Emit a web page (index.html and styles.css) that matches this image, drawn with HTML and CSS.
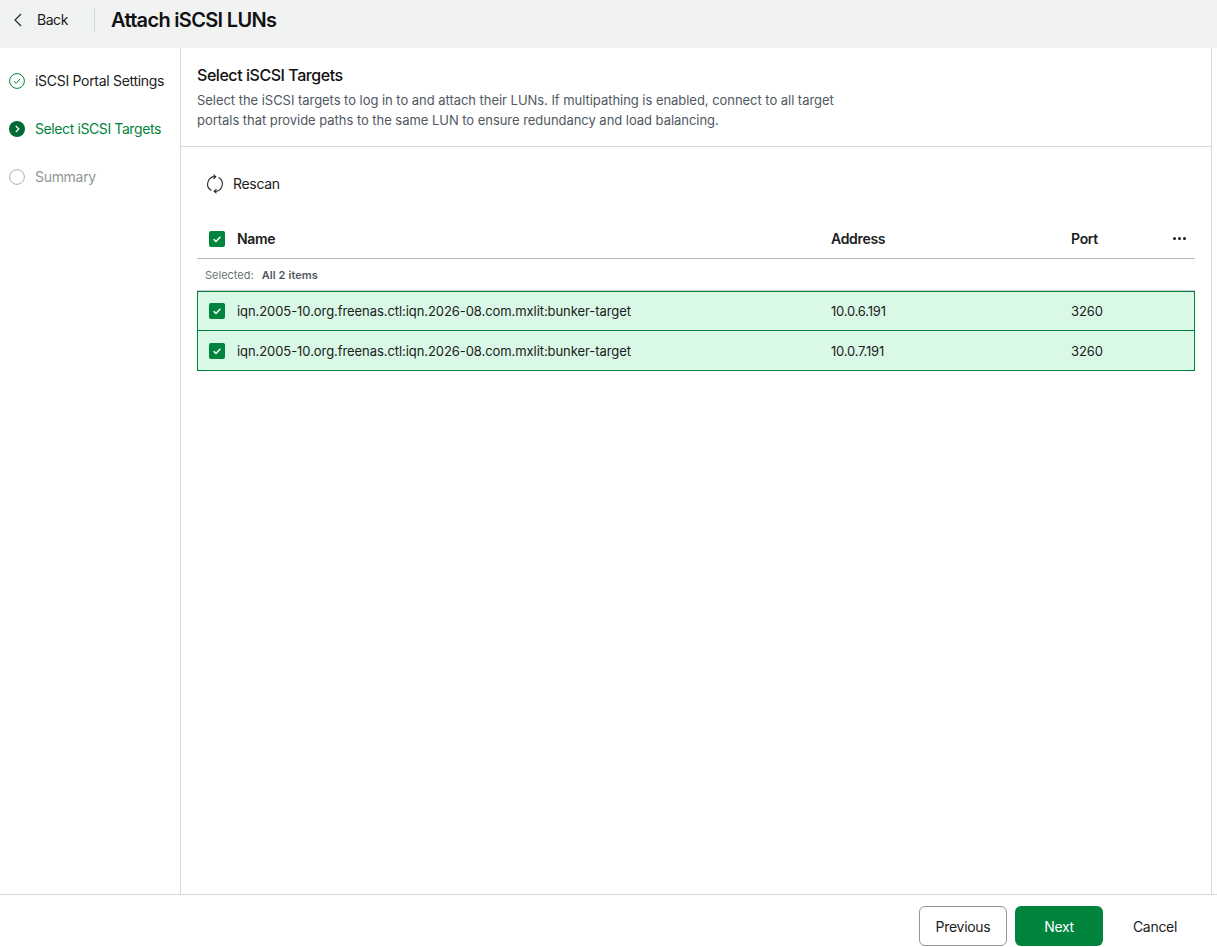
FILE: index.html
```html
<!DOCTYPE html>
<html>
<head>
    <meta charset="utf-8">
    <title>Attach iSCSI LUNs</title>
    <link rel="stylesheet" href="styles.css">
</head>
<body>
<header class="topbar">
    <div class="back">
        <svg class="back-icon" width="10" height="14" viewBox="0 0 10 14"><path d="M8 1 2 7l6 6" fill="none" stroke="#232b2b" stroke-width="1.2"/></svg>
        <span>Back</span>
    </div>
    <h1>Attach iSCSI LUNs</h1>
</header>
<div class="wizard">
    <nav class="steps">
        <div class="step done">
            <svg width="16" height="16" viewBox="0 0 16 16"><circle cx="8" cy="8" r="7.4" fill="none" stroke="#00843d" stroke-width="1"/><path d="M5 8.2 7.2 10.3 11 6" fill="none" stroke="#00843d" stroke-width="1"/></svg>
            <span>iSCSI Portal Settings</span>
        </div>
        <div class="step current">
            <svg width="16" height="16" viewBox="0 0 16 16"><circle cx="8" cy="8" r="8" fill="#006b35"/><path d="M6.8 5 9.8 8l-3 3" fill="none" stroke="#fff" stroke-width="1.2"/></svg>
            <span>Select iSCSI Targets</span>
        </div>
        <div class="step todo">
            <svg width="16" height="16" viewBox="0 0 16 16"><circle cx="8" cy="8" r="7.4" fill="none" stroke="#a9afaf" stroke-width="1"/></svg>
            <span>Summary</span>
        </div>
    </nav>
    <main class="content">
        <section class="intro">
            <h2>Select iSCSI Targets</h2>
            <p>Select the iSCSI targets to log in to and attach their LUNs. If multipathing is enabled, connect to all target portals that provide paths to the same LUN to ensure redundancy and load balancing.</p>
        </section>
        <section class="targets">
            <div class="toolbar">
                <svg width="18" height="20" viewBox="0 0 18 20" fill="none" stroke="#232b2b" stroke-width="1.1"><path d="M9.6 2.7A7.4 7.4 0 0 0 5.4 16.5"/><path d="M8.4 17.3A7.4 7.4 0 0 0 12.6 3.5"/><path d="M7.5 .6 9.8 2.7 7.5 4.8"/><path d="M10.5 15.2 8.2 17.3 10.5 19.4"/></svg>
                <span>Rescan</span>
            </div>
            <div class="row head">
                <span class="check"><svg width="16" height="16" viewBox="0 0 16 16"><path d="M4.6 8.2 7 10.4l4.4-4.6" fill="none" stroke="#fff" stroke-width="1.5"/></svg></span>
                <span class="col-name">Name</span>
                <span class="col-address">Address</span>
                <span class="col-port">Port</span>
                <span class="more"><i></i><i></i><i></i></span>
            </div>
            <div class="selected"><span>Selected:</span><b>All 2 items</b></div>
            <div class="rows">
                <div class="row item">
                    <span class="check"><svg width="16" height="16" viewBox="0 0 16 16"><path d="M4.6 8.2 7 10.4l4.4-4.6" fill="none" stroke="#fff" stroke-width="1.5"/></svg></span>
                    <span class="col-name">iqn.2005-10.org.freenas.ctl:iqn.2026-08.com.mxlit:bunker-target</span>
                    <span class="col-address">10.0.6.191</span>
                    <span class="col-port">3260</span>
                </div>
                <div class="row item">
                    <span class="check"><svg width="16" height="16" viewBox="0 0 16 16"><path d="M4.6 8.2 7 10.4l4.4-4.6" fill="none" stroke="#fff" stroke-width="1.5"/></svg></span>
                    <span class="col-name">iqn.2005-10.org.freenas.ctl:iqn.2026-08.com.mxlit:bunker-target</span>
                    <span class="col-address">10.0.7.191</span>
                    <span class="col-port">3260</span>
                </div>
            </div>
        </section>
    </main>
</div>
<footer class="actions">
    <button class="btn outline">Previous</button>
    <button class="btn primary">Next</button>
    <button class="btn plain">Cancel</button>
</footer>
</body>
</html>
```

FILE: styles.css
```css
html, body {
    height: 100%;
}

body {
    margin: 0;
    display: flex;
    flex-direction: column;
    font-family: Inter, "Liberation Sans", sans-serif;
    font-size: 14px;
    line-height: 20px;
    letter-spacing: -0.3px;
    color: #1b2020;
    background: #fff;
    overflow: hidden;
}

.topbar {
    height: 48px;
    flex: none;
    display: flex;
    align-items: center;
    background: #f1f3f3;
    padding: 0 0 8px 13px;
    box-sizing: border-box;
}

.back {
    display: flex;
    align-items: center;
    height: 24px;
    width: 81px;
    border-right: 1px solid #d3d8d8;
    margin-right: 16px;
    letter-spacing: -0.45px;
}

.back-icon {
    margin-right: 14px;
}

.topbar h1 {
    margin: 0;
    font-size: 20px;
    font-weight: 600;
    line-height: 24px;
    letter-spacing: -0.68px;
    color: #111;
}

.wizard {
    flex: 1;
    display: flex;
    min-height: 0;
}

.steps {
    width: 181px;
    flex: none;
    box-sizing: border-box;
    border-right: 1px solid #d3d8d8;
    padding: 9px 0 0 9px;
}

.step {
    display: flex;
    align-items: center;
    gap: 10px;
    height: 48px;
}

.step.current {
    color: #00843d;
    letter-spacing: -0.4px;
}

.step.todo {
    color: #8f9797;
}

.content {
    width: 1031px;
    box-sizing: border-box;
    border-right: 1px solid #d3d8d8;
    display: flex;
    flex-direction: column;
}

.intro {
    height: 99px;
    box-sizing: border-box;
    border-bottom: 1px solid #d3d8d8;
    padding: 17px 16px 0;
}

.intro h2 {
    margin: 0 0 5px;
    font-size: 16px;
    font-weight: 500;
    line-height: 20px;
    letter-spacing: -0.45px;
    color: #111;
}

.intro p {
    margin: 0;
    width: 660px;
    color: #505861;
    font-size: 13px;
    letter-spacing: -0.04px;
}

.targets {
    padding: 0 16px;
}

.toolbar {
    display: flex;
    align-items: center;
    gap: 9px;
    height: 74px;
    padding-left: 9px;
}

.row {
    display: flex;
    align-items: center;
}

.head {
    height: 35px;
    padding-bottom: 2px;
    font-weight: 600;
    border-bottom: 1px solid #b4baba;
}

.check {
    width: 16px;
    height: 16px;
    margin: 0 12px;
    flex: none;
    border-radius: 2px;
    background: #00843d;
}

.check svg {
    display: block;
}

.col-name {
    width: 594px;
    flex: none;
}

.item .check {
    margin-left: 11px;
}

.item .col-name,
.item .col-address,
.item .col-port {
    font-size: 13px;
    letter-spacing: -0.07px;
}

.item .col-address {
    letter-spacing: -0.2px;
}

.col-address {
    width: 240px;
    flex: none;
}

.col-port {
    flex: 1;
}

.more {
    display: flex;
    gap: 2px;
    margin-right: 9px;
}

.more i {
    width: 3px;
    height: 3px;
    border-radius: 50%;
    background: #1b2020;
}

.selected {
    height: 31px;
    display: flex;
    align-items: center;
    gap: 8px;
    padding-left: 8px;
    font-size: 11px;
    letter-spacing: 0;
    color: #6b7373;
    border-bottom: 1px solid #c9cece;
}

.selected b {
    font-weight: 600;
    color: #505861;
    letter-spacing: 0.1px;
}

.rows {
    border: 1px solid #00843d;
}

.item {
    height: 38px;
    background: #d9f9e6;
}

.item + .item {
    height: 39px;
    border-top: 1px solid #00843d;
}

.actions {
    height: 53px;
    flex: none;
    box-sizing: border-box;
    border-top: 1px solid #d3d8d8;
    display: flex;
    justify-content: flex-end;
    align-items: flex-end;
    gap: 8px;
    padding: 0 18px 1px 0;
}

.btn {
    width: 88px;
    height: 40px;
    box-sizing: border-box;
    padding: 1px 0 0;
    border-radius: 6px;
    border: 1px solid transparent;
    background: none;
    font: inherit;
    letter-spacing: inherit;
    color: #1b2020;
}

.outline {
    border-color: #8f9797;
}

.primary {
    background: #00843d;
    color: #fff;
}
```
